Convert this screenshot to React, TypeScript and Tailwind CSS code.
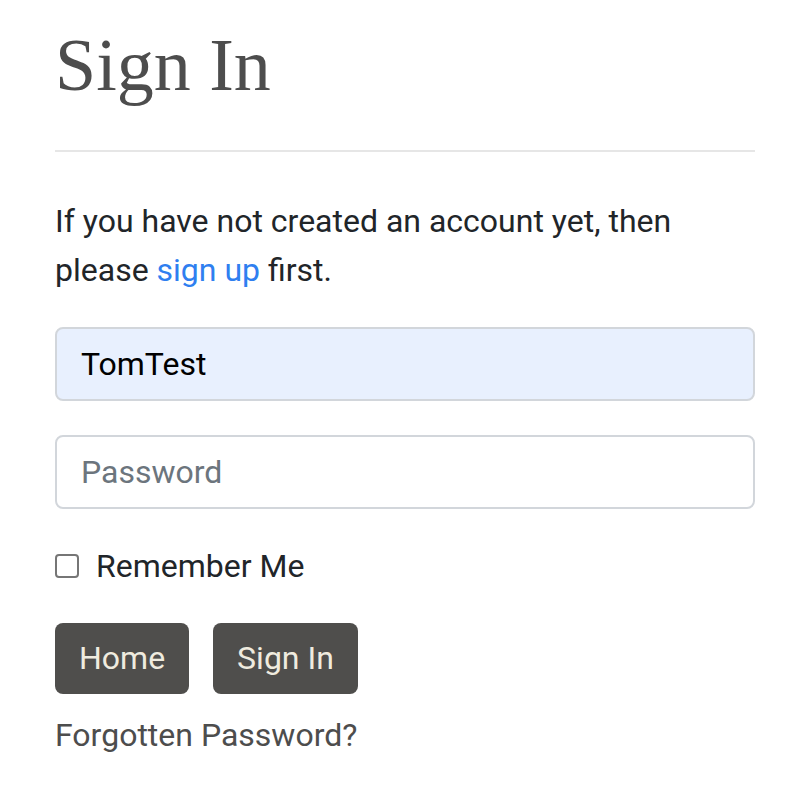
import React from "react";

export default function App() {
  return (
    <div className="w-[810px] h-[796px] bg-white" style={{ fontFamily: "Roboto, 'Liberation Sans', sans-serif" }}>
      <div className="ml-[55px] w-[700px] pt-[21px]">
        <h1 className="text-[74px] leading-[1.2] text-[#4d4d4d] font-normal" style={{ fontFamily: "'Liberation Serif', serif" }}>
          Sign In
        </h1>
        <div className="mt-[40px] h-[2px] bg-[#e6e6e6]" />
        <p className="mt-[45px] text-[32px] leading-[49px] text-[#212529]">
          If you have not created an account yet, then
          <br />
          please <a className="text-[#2f7ff0]">sign up</a> first.
        </p>
        <div className="mt-[32px] flex flex-col gap-[34px]">
          <div className="h-[74px] rounded-[8px] border-2 border-[#d2d6db] bg-[#e8f0fe] flex items-center px-[24px] text-[32px] text-black">
            TomTest
          </div>
          <div className="h-[74px] rounded-[8px] border-2 border-[#d2d6db] bg-white flex items-center px-[24px] text-[32px] text-[#6c757d]">
            Password
          </div>
        </div>
        <div className="mt-[33px] h-[48px] flex items-center gap-[17px]">
          <div className="w-[24px] h-[24px] rounded-[4px] border-2 border-[#767676] bg-white" />
          <span className="text-[32px] leading-[48px] text-[#212529]">Remember Me</span>
        </div>
        <div className="mt-[33px] flex gap-[24px]">
          <div className="h-[71px] px-[24px] rounded-[8px] bg-[#4f4e4c] text-[#efebdf] text-[32px] flex items-center">Home</div>
          <div className="h-[71px] px-[24px] rounded-[8px] bg-[#4f4e4c] text-[#efebdf] text-[32px] flex items-center">Sign In</div>
        </div>
        <div className="mt-[17px] text-[32px] leading-[48px] text-[#4d4d4d]">Forgotten Password?</div>
      </div>
    </div>
  );
}
